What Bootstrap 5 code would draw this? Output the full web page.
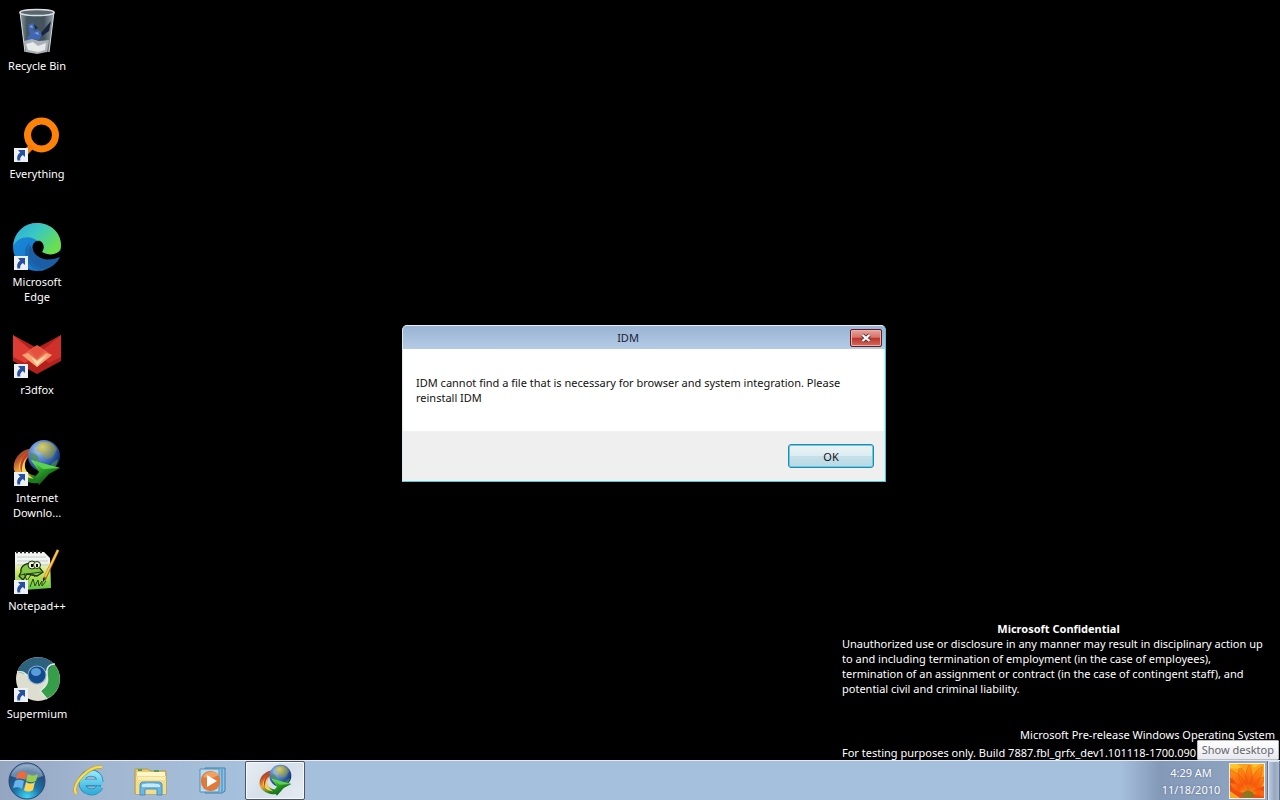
<!DOCTYPE html>
<html lang="en">
<head>
<meta charset="utf-8">
<meta name="viewport" content="width=device-width, initial-scale=1">
<title>Desktop</title>
<link href="https://cdn.jsdelivr.net/npm/bootstrap@5.3.0/dist/css/bootstrap.min.css" rel="stylesheet">
<style>
body{background:#000;color:#fff;font:11px/15px "Noto Sans","Open Sans",sans-serif}
button{font:inherit;color:inherit}
.desk-icons{width:74px;padding-top:7px}
.desk-icon{height:108px;color:#fff;text-decoration:none;text-align:center}
.desk-icon:last-child{height:auto}
.desk-icon svg{display:block;width:48px;height:48px;margin:0 auto 3px;overflow:visible}
.desk-icon span{display:block;white-space:nowrap}
.dialog-window{left:402px;top:325px;width:484px;color:#111;background:#efefef;border:1px solid #55c5d8;border-top-color:#e4f0fa;border-left-color:#d5eef5;border-radius:5px 5px 0 0;box-shadow:inset -1px 0 #d5eef5}
.title-strip{height:23px;padding-right:32px;background:linear-gradient(#9ab3d3,#a9c2de 60%,#b5cbe4);border-radius:4px 4px 0 0;color:#1a2238}
.close-btn{right:3px;top:3px;width:32px;height:18px;padding:0;border:1px solid #5e1c26;border-radius:2px;background:linear-gradient(#e9a49c,#d67268 46%,#bd3429 50%,#d5695c);box-shadow:inset 0 0 0 1px #ecb0aa}
.close-btn svg{display:block;margin:auto}
.message-area{background:#fff;height:82px;padding:26px 13px 0;margin-right:1px}
.action-area{height:50px;padding:13px 11px}
.ok-btn{width:86px;height:24px;padding:0;border:1px solid #3c7f9f;border-radius:3px;background:linear-gradient(#eaf3f6,#ddecf1 48%,#c5e0e9 52%,#b6dae6);box-shadow:inset 0 0 0 1px #4fd5f3}
.watermark{width:433px;margin-right:5px;white-space:nowrap}
.watermark .gap-block{margin-bottom:31px}
.watermark .product-line{margin-bottom:3px}
.taskbar-strip{height:40px;background:linear-gradient(90deg,#94a5c1,#a1b5d0 90px,#a5c0dc 240px);border-top:1px solid #e4eaf2}
.task-list{gap:2px;padding-left:6px}
.start-btn{width:51px;padding:0;border:0;background:none}
.task-btn{width:60px;height:39px;padding:0;border:1px solid transparent;background:none}
.task-btn.current{background:linear-gradient(135deg,#e9edf4,#d5dfea 50%,#e8edf3);border-color:#49566b;box-shadow:inset 0 0 0 1px #f8fafc;border-radius:2px}
.task-btn svg,.start-btn svg{display:block;margin:auto}
.tray{width:160px;background:linear-gradient(90deg,#a5c0dc,#8499b8 40px,#8da2bf 110px,#9cafca)}
.clock{line-height:17px;text-shadow:0 0 2px #53678a;width:70px;padding-top:3px}
.user-tile{width:36px;height:36px;border:1px solid #f7f1e4;padding:0;margin:0 2px 0 3px}
.peek-btn{width:13px;padding:0;border:1px solid #60718b;border-width:0 1px;background:linear-gradient(90deg,#c3cedd,#96a8c1 60%,#a9b8cd);box-shadow:inset 1px 1px #dce4ee}
.tip{right:1px;bottom:40px;height:20px;padding:1px 4px;background:linear-gradient(#fff,#e7e8f1);border:1px solid #bbb;color:#666;border-radius:1px;white-space:nowrap}
</style>
</head>
<body class="min-vh-100 d-flex flex-column position-relative overflow-hidden">
<svg width="0" height="0" class="position-absolute" aria-hidden="true">
<defs>
<linearGradient id="edgeTop" x1="0" y1="0" x2="1" y2=".6"><stop offset="0" stop-color="#2aa8de"/><stop offset=".5" stop-color="#3bc9c0"/><stop offset="1" stop-color="#6be04a"/></linearGradient>
<linearGradient id="edgeLow" x1="0" y1="0" x2="1" y2="1"><stop offset="0" stop-color="#1b8bdc"/><stop offset="1" stop-color="#1570c4"/></linearGradient>
<radialGradient id="globe" cx=".35" cy=".3" r=".75"><stop offset="0" stop-color="#b9d4f4"/><stop offset=".3" stop-color="#6d98d6"/><stop offset=".7" stop-color="#2857aa"/><stop offset="1" stop-color="#0c2456"/></radialGradient>
<radialGradient id="land" cx=".3" cy=".3" r=".9"><stop offset="0" stop-color="#d9cf6c"/><stop offset="1" stop-color="#6b7a35" stop-opacity=".5"/></radialGradient>
<linearGradient id="swoosh" x1="0" y1="0" x2=".5" y2="1"><stop offset="0" stop-color="#3e8f2c"/><stop offset=".3" stop-color="#b8462a"/><stop offset=".6" stop-color="#e8a93d"/><stop offset="1" stop-color="#1b7c20"/></linearGradient>
<linearGradient id="arrowGreen" x1="0" y1="0" x2=".7" y2="1"><stop offset="0" stop-color="#8be86a"/><stop offset=".4" stop-color="#2fa42c"/><stop offset="1" stop-color="#07400b"/></linearGradient>
<linearGradient id="glass" x1="0" x2="1"><stop offset="0" stop-color="#8d9ca5"/><stop offset=".2" stop-color="#46565f"/><stop offset=".7" stop-color="#43525d"/><stop offset="1" stop-color="#9aa8ae"/></linearGradient>
<linearGradient id="note" x1="0" y1="0" x2="0" y2="1"><stop offset=".25" stop-color="#f3f5ee"/><stop offset=".55" stop-color="#cbe65c"/><stop offset="1" stop-color="#5fc541"/></linearGradient>
<radialGradient id="orb" cx=".5" cy=".95" r=".95"><stop offset="0" stop-color="#3fd8f5"/><stop offset=".4" stop-color="#1d72a8"/><stop offset=".75" stop-color="#234d7e"/><stop offset="1" stop-color="#8fa9c6"/></radialGradient>
<linearGradient id="ieBlue" x1="0" y1="0" x2="0" y2="1"><stop offset="0" stop-color="#8fe4f8"/><stop offset="1" stop-color="#35b0dc"/></linearGradient>
<radialGradient id="petal" gradientUnits="userSpaceOnUse" cx="18" cy="29" r="28"><stop offset="0" stop-color="#ffb41c"/><stop offset=".35" stop-color="#fa5a0c"/><stop offset="1" stop-color="#ff9416"/></radialGradient>
<symbol id="shortcut" viewBox="0 0 14 14"><path fill="#edf0f5" d="M0 0h14v14H0z"/><path fill="#2750a0" d="M4 2h7v7L8.800 7C6.500 8.500 6 10 6.200 12.500H3.500C2.500 9 3.500 6.500 6.200 4.500z"/></symbol>
<symbol id="idm" viewBox="0 0 48 48">
<path fill="url(#swoosh)" d="M20 9C8 10-1 20 1 31c3 10 14 14 25 13l-2-7c-9-1-13-6-12-12 1-5 4-9 10-12z"/>
<path fill="#f0d456" d="M13 17C4 23 4 32 13 38l8 2C12 34 9 26 14 18z"/><path fill="#c43c22" d="M17 13C8 18 5 26 9 35 8 26 11 19 18 15z"/>
<circle cx="31" cy="17" r="16" fill="url(#globe)"/>
<path fill="url(#land)" d="M26 4c7-3 14-1 18 6l-3 6-2 3-6 1-5-6-5-2z"/><path fill="#4d8f4e" opacity=".7" d="M17 14c4 0 8 2 9 6l-5 4c-3-2-5-6-4-10zM38 25l7-5c-1 6-3 9-6 10z"/>
<path fill="url(#arrowGreen)" d="M18 21l29 8-11 6-10 11-4-8 4-5z"/><path fill="#59d44a" d="M18 21l29 8-17 1z"/></symbol>
</defs></svg>

<main class="flex-grow-1 d-flex justify-content-between">
<nav class="desk-icons" aria-label="Desktop">
<a href="#" class="desk-icon d-block"><svg viewBox="0 0 48 48"><path fill="url(#glass)" d="M7 5h34l-5 40H12z"/><path fill="#3f66b5" d="M15 18l5-2 2 4-2 4 6-1 3 4-3 6-5-1-3 4-4-4 3-5z"/><path fill="#7fa1dd" d="M16 20l3-2 1 3zM21 26l4-1 1 3z"/><path fill="#18243b" d="M28 26l10-12-2 10-7 5zM21 17l4 4-3 1z"/><path fill="#a9b0b6" d="M11 34l8-2 7 2 10-1-2 12-10 2-11-2z"/><path fill="#e8eaea" d="M13 37l7-2 5 4 8-3-1 7-7 2-10-2z"/><path stroke="#d6dde0" fill="none" d="M7 5l5 40M41 5l-5 40"/><ellipse cx="24" cy="5.500" rx="17" ry="3" fill="#59666d" stroke="#dce1e3" stroke-width="1.500"/></svg><span>Recycle Bin</span></a>
<a href="#" class="desk-icon d-block"><svg viewBox="0 0 48 48"><circle cx="28.500" cy="20" r="14" fill="none" stroke="#ff8208" stroke-width="7"/><path stroke="#f47b0a" stroke-width="6" d="M19 31l-7 7"/><use href="#shortcut" x="1" y="33" width="14" height="14"/></svg><span>Everything</span></a>
<a href="#" class="desk-icon d-block"><svg viewBox="0 0 48 48"><circle cx="24" cy="24" r="24" fill="url(#edgeLow)"/><path fill="url(#edgeTop)" d="M0 23C2 8 12 0 24 0c14 0 24 10 24 22 0 8-7 11-13 10-4 0-7-1-7-3 3-4 2-9-3-11C16 11 5 14 0 23z"/><path fill="#1d65ad" d="M17 20c-6 10 1 25 15 28-12 0-20-9-20-18 0-5 2-8 5-10z"/><path fill="#1b5ea6" d="M17 22c-5 9 1 21 12 24 8 0 15-5 18-12-8 5-24 4-30-12z"/><path fill="#000" d="M27 18c-5-1-9 4-7 9 3 9 17 13 28 6l1-7c-5 6-13 7-20 3 3-4 2-9-2-11z"/><use href="#shortcut" x="1" y="33" width="14" height="14"/></svg><span>Microsoft<br>Edge</span></a>
<a href="#" class="desk-icon d-block"><svg viewBox="0 0 48 48"><path fill="#b3211d" d="M0 4l24 13L48 4v26L24 43 0 30z"/><path fill="#dd3c32" d="M0 4l24 20-12 8L0 26z"/><path fill="#cf3029" d="M48 4L24 24l12 8 12-6z"/><path fill="#e8604a" d="M24 14l15 10-15 12L9 24z"/><path fill="#f7a373" d="M9 24l6-2 9 7 9-7 6 2-15 12z"/><path fill="#fbdcae" d="M18 26l6 4 10-6-10 11z"/><path fill="#e5503f" d="M17 20l7-5 7 5-7 7z"/><use href="#shortcut" x="1" y="33" width="14" height="14"/></svg><span>r3dfox</span></a>
<a href="#" class="desk-icon d-block"><svg><use href="#idm" width="48" height="48"/><use href="#shortcut" x="1" y="33" width="14" height="14"/></svg><span>Internet<br>Downlo...</span></a>
<a href="#" class="desk-icon d-block"><svg viewBox="0 0 48 48"><path fill="url(#note)" d="M2 5h29l6 6 1 30-27 2-9-5z"/><path fill="none" stroke="#bcc9d4" d="M4 10h29M4 14h31M4 18h31"/><path fill="none" stroke="#222" stroke-width="2.500" stroke-dasharray="2 2" d="M3 5h27"/><path fill="#83c744" stroke="#1e3012" stroke-width="1.300" d="M8 25c-1-7 7-10 13-8l5 3 4 5-6 4-10-2-4 6-4-4z"/><circle cx="19" cy="18" r="4" fill="#e8f5ce" stroke="#1e3012"/><circle cx="24" cy="18" r="3.500" fill="#e8f5ce" stroke="#1e3012"/><path d="M18 17h2v3h-2zM23 17h2v3h-2z"/><path fill="none" stroke="#234717" d="M7 28l21-3M11 26l3 8 5-8 3 4M17 40l3-8 2 7 3-6 1 6 3-5v5l4-5"/><path stroke="#8e5220" stroke-width="3" d="M31 33L45 3"/><path stroke="#ffc44a" stroke-width="2" d="M32 30L45 3"/><path fill="#211" d="M30 35v-4l2 1z"/><use href="#shortcut" x="1" y="33" width="14" height="14"/></svg><span>Notepad++</span></a>
<a href="#" class="desk-icon d-block"><svg viewBox="0 0 48 48"><circle cx="25" cy="24" r="22" fill="#deded0"/><path fill="#2d627f" d="M4 17C10 1 31-3 42 10l-8 7c-5-4-14-4-17 3z"/><path fill="#369d48" d="M40 8c11 11 9 29-7 36l-5-8c7-5 9-10 6-18z"/><path fill="none" stroke="#dcebe3" stroke-width="1.500" d="M4 17c5-1 9 1 11 5M42 9c-6 0-9 4-8 10s-1 13-7 17l7 8"/><circle cx="24" cy="20" r="9.500" fill="#8fb6cc"/><circle cx="24" cy="20" r="8.500" fill="#134a8e"/><ellipse cx="23" cy="17" rx="5" ry="4" fill="#589dd9"/><use href="#shortcut" x="1" y="33" width="14" height="14"/></svg><span>Supermium</span></a>
</nav>
<div class="watermark align-self-end">
<div class="text-center fw-bold">Microsoft Confidential</div>
<div class="gap-block">Unauthorized use or disclosure in any manner may result in disciplinary action up<br>to and including termination of employment (in the case of employees),<br>termination of an assignment or contract (in the case of contingent staff), and<br>potential civil and criminal liability.</div>
<div class="product-line text-end">Microsoft Pre-release Windows Operating System</div>
<div>For testing purposes only. Build 7887.fbl_grfx_dev1.101118-1700.090</div>
</div>
</main>

<section class="dialog-window position-absolute" role="dialog" aria-labelledby="dialogTitle">
<header class="title-strip position-relative d-flex align-items-center justify-content-center"><span id="dialogTitle">IDM</span>
<button class="close-btn position-absolute" aria-label="Close"><svg width="12" height="10" viewBox="0 0 12 10"><path d="M2.500 2l7 6M9.500 2l-7 6" stroke="#60333a" stroke-width="4"/><path d="M2.500 2l7 6M9.500 2l-7 6" stroke="#fff" stroke-width="2.300"/></svg></button></header>
<div class="message-area">IDM cannot find a file that is necessary for browser and system integration. Please<br>reinstall IDM</div>
<div class="action-area text-end"><button class="ok-btn">OK</button></div>
</section>

<footer class="taskbar-strip d-flex">
<div class="task-list d-flex">
<button class="start-btn" aria-label="Start"><svg class="ms-0" width="42" height="38" viewBox="0 0 42 38"><circle cx="21" cy="19" r="18" fill="url(#orb)" stroke="#29476b"/><path fill="#bed0e2" opacity=".45" d="M5 14C9-1 33-1 37 14c-9 4-23 4-32 0z"/><path fill="#f0693a" d="M12 11c3-2 6-2 9 0l-2 7c-3-2-6-2-9-1z"/><path fill="#9acc4d" d="M22 12c3 2 6 2 10 0l-2 7c-4 2-7 1-10 0z"/><path fill="#67b4ee" d="M9 19c3-2 6-1 9 0l-2 8c-2-2-6-2-9-1z"/><path fill="#ffd452" d="M20 20c3 2 6 2 9 0l-2 8c-3 2-7 2-9 0z"/></svg></button>
<button class="task-btn" aria-label="Internet Explorer"><svg width="34" height="34" viewBox="0 0 34 34"><path fill="none" stroke="#2386b5" stroke-width="7" d="M29 19H11M28 23c-5 8-18 6-18-5 0-12 18-12 18 0"/><path fill="none" stroke="url(#ieBlue)" stroke-width="5.500" d="M30.500 18.500H11M28 23c-5 8-18 6-18-5 0-12 18-12 18 0"/><path fill="none" stroke="#c49a22" stroke-width="3.500" d="M4 30C-1 20 16 2 30 3"/><path fill="none" stroke="#f7dc55" stroke-width="2.300" d="M4 30C-1 20 16 2 30 3"/></svg></button>
<button class="task-btn" aria-label="Windows Explorer"><svg width="34" height="32" viewBox="0 0 34 32"><path fill="#e8ca72" stroke="#b99a45" d="M1 4h13l2 2h16v23H1z"/><path fill="#fff5c7" d="M3 7h28v20H3z"/><path fill="#f4dd8a" d="M2 11h30v18H2z"/><path fill="#5b9b58" d="M4 4h4v2H4zM20 5h5v2h-5z"/><path fill="#f8efb8" d="M4 12h27v3H4z"/><path fill="#68b8e5" stroke="#4a8dbb" d="M6 30v-9c0-3 1-4 4-4h14c3 0 4 1 4 4v9h-5v-6H11v6z"/><path fill="#c6e9f8" d="M8 20c0-2 16-2 18 0v2H8z"/></svg></button>
<button class="task-btn" aria-label="Windows Media Player"><svg width="34" height="32" viewBox="0 0 34 32"><path fill="#8cc3e5" stroke="#427eab" d="M9 3h20v23l-3 2H9z"/><path fill="none" stroke="#3f88ba" d="M26 4v23"/><path fill="#b6ddf2" stroke="#578fb5" d="M4 4h19v23H4z"/><rect x="5" y="6" width="19" height="20" rx="9" fill="#e0793a"/><path fill="#f0a063" d="M7 12c2-6 13-7 16-2-6 3-10 4-16 2z"/><path fill="#fff" d="M11 10l10 6-10 6z"/></svg></button>
<button class="task-btn current" aria-label="Internet Download Manager"><svg width="33" height="33"><use href="#idm" width="33" height="33"/></svg></button>
</div>
<div class="tray d-flex ms-auto justify-content-end">
<div class="clock text-center">4:29 AM<br>11/18/2010</div>
<button class="user-tile align-self-center" aria-label="User account"><svg class="d-block w-100 h-100" viewBox="0 0 34 34"><path fill="#f8a51b" d="M0 0h34v34H0z"/><path fill="#ee4c12" d="M18 28L0 13v14l10 7h10zM18 28L34 22v12H18z"/><path fill="url(#petal)" stroke="#e2560a" stroke-width=".500" d="M18 29C8 24 0 14 0 6c10 3 17 13 18 23zM18 29C10 20 6 9 10 3c6 5 9 15 8 26zM18 29C15 18 15 7 19 1c5 8 4 18-1 28zM18 29C19 16 24 7 32 3c1 11-6 19-14 26zM18 29C23 20 29 13 34 13c0 10-7 15-16 16zM18 29C9 30 2 26 0 19c8 0 14 4 18 10zM18 29c6-4 12-4 16-2v6z"/><path fill="#ffc52c" d="M0 0h7l5 3-5 2-7-1zM22 0h8l-6 4z"/><ellipse cx="18" cy="31" rx="6" ry="4" fill="#8c7620"/></svg></button>
<button class="peek-btn" aria-label="Show desktop"></button>
</div>
</footer>
<div class="tip position-absolute" role="tooltip">Show desktop</div>
<script src="https://cdn.jsdelivr.net/npm/bootstrap@5.3.0/dist/js/bootstrap.bundle.min.js"></script>
</body>
</html>
